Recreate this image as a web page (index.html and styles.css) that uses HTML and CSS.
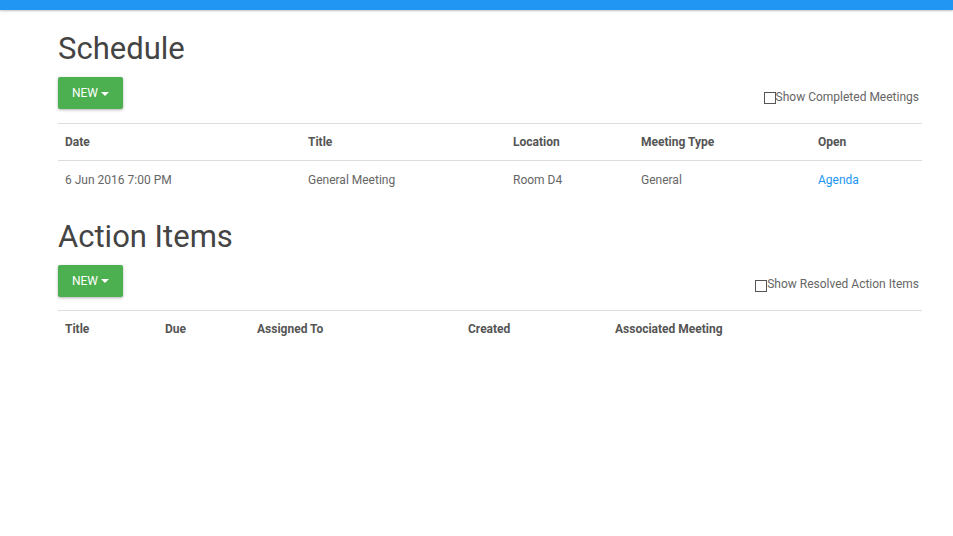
FILE: index.html
```html
<!DOCTYPE html>
<html>
<head>
<meta charset="utf-8">
<link rel="stylesheet" href="styles.css">
</head>
<body>
<div class="topbar"></div>
<main class="container">
  <section class="section">
    <h1 class="title">Schedule</h1>
    <div class="toolbar">
      <button class="btn-new">NEW <span class="caret"></span></button>
      <label class="toggle"><span class="box"></span>Show Completed Meetings</label>
    </div>
    <table class="table schedule">
      <thead>
        <tr><th class="c1">Date</th><th class="c2">Title</th><th class="c3">Location</th><th class="c4">Meeting Type</th><th class="c5">Open</th></tr>
      </thead>
      <tbody>
        <tr><td>6 Jun 2016 7:00 PM</td><td>General Meeting</td><td>Room D4</td><td>General</td><td><a class="link" href="#">Agenda</a></td></tr>
      </tbody>
    </table>
  </section>
  <section class="section">
    <h1 class="title title2">Action Items</h1>
    <div class="toolbar toolbar2">
      <button class="btn-new">NEW <span class="caret"></span></button>
      <label class="toggle"><span class="box"></span>Show Resolved Action Items</label>
    </div>
    <table class="table actions">
      <thead>
        <tr><th class="a1">Title</th><th class="a2">Due</th><th class="a3">Assigned To</th><th class="a4">Created</th><th class="a5">Associated Meeting</th></tr>
      </thead>
    </table>
  </section>
</main>
</body>
</html>
```
FILE: styles.css
```css
html, body { margin: 0; padding: 0; background: #fff; }
body { font-family: Roboto, "Noto Sans", sans-serif; color: #555; }
.topbar { height: 10px; background: #2196f3; box-shadow: 0 1px 2px rgba(0,0,0,0.25); }
.container { width: 864px; margin: 0 0 0 58px; }
.title { font-weight: 400; font-size: 31px; color: #444; margin: 0; line-height: 36px; padding-top: 21px; height: 46px; }
.title2 { padding-top: 20px; height: 46px; }
.toolbar { display: flex; justify-content: space-between; align-items: flex-start; height: 46px; }
.toolbar2 { height: 45px; }
.btn-new { width: 65px; height: 32px; border: none; border-radius: 2px; background: #4caf50; color: #fff; font-family: Roboto, sans-serif; font-size: 12px; padding: 0; display: flex; align-items: center; justify-content: center; gap: 3px; box-shadow: 0 1px 3px rgba(0,0,0,0.3); }
.caret { width: 0; height: 0; border-left: 4px solid transparent; border-right: 4px solid transparent; border-top: 4px solid #fff; margin-top: 1px; }
.toggle { display: flex; align-items: center; font-size: 12px; color: #666; margin-right: 3px; margin-top: 12px; }
.box { width: 10px; height: 10px; border: 1px solid #555; margin-top: 3px; }
.table { width: 864px; border-collapse: collapse; table-layout: fixed; font-size: 12px; }
.table th, .table td { box-sizing: border-box; text-align: left; height: 37px; padding: 0 0 0 7px; border-top: 1px solid #ddd; }
.table th { font-weight: 700; color: #555; }
.table td { color: #666; height: 38px; padding-top: 1px; }
.c1 { width: 243px; } .c2 { width: 205px; } .c3 { width: 128px; } .c4 { width: 177px; } .c5 { width: 111px; }
.a1 { width: 100px; } .a2 { width: 92px; } .a3 { width: 211px; } .a4 { width: 147px; } .a5 { width: 314px; }
.link { color: #2196f3; text-decoration: none; }
```
